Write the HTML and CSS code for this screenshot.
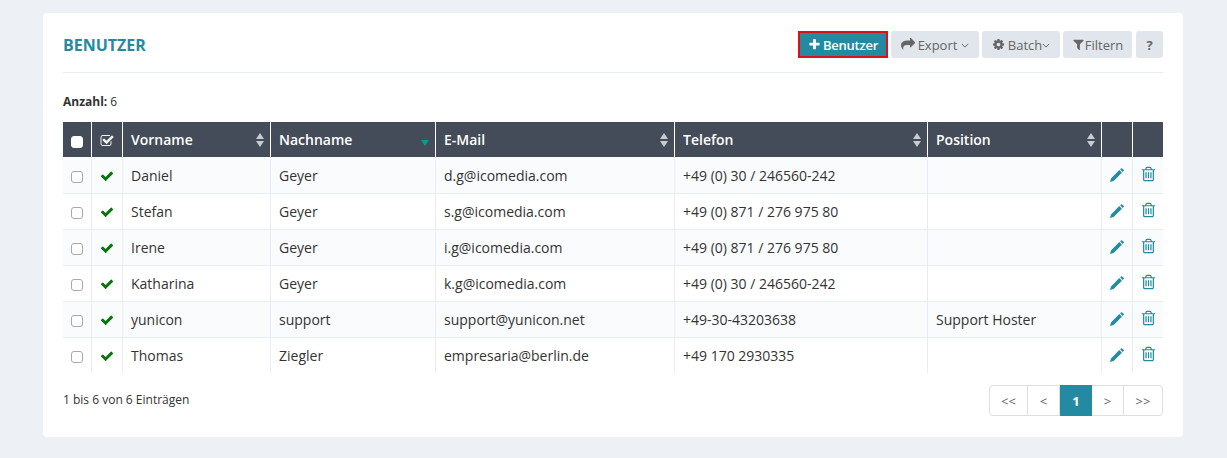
FILE: index.html
```html
<!DOCTYPE html>
<html lang="de">
<head>
<meta charset="utf-8">
<title>Benutzer</title>
<link rel="stylesheet" href="styles.css">
</head>
<body>
<svg class="sprite" xmlns="http://www.w3.org/2000/svg">
<symbol id="i-plus" viewBox="0 0 1792 1792"><path d="M1600 736v192q0 40-28 68t-68 28h-416v416q0 40-28 68t-68 28h-192q-40 0-68-28t-28-68v-416h-416q-40 0-68-28t-28-68v-192q0-40 28-68t68-28h416v-416q0-40 28-68t68-28h192q40 0 68 28t28 68v416h416q40 0 68 28t28 68z"/></symbol>
<symbol id="i-share" viewBox="0 0 1792 1792"><path d="M1792 640q0 26-19 45l-512 512q-19 19-45 19t-45-19-19-45v-256h-224c-400 0-640 70-640 420 0 60 6 110 14 160 4 24-24 36-38 16-60-90-264-300-264-560 0-480 420-616 928-616h224v-256q0-26 19-45t45-19 45 19l512 512q19 19 19 45z"/></symbol>
<symbol id="i-cog" viewBox="0 0 1792 1792"><path d="M1152 896q0-106-75-181t-181-75-181 75-75 181 75 181 181 75 181-75 75-181zm512-109v222q0 12-8 23t-20 13l-185 28q-19 54-39 91 35 50 107 138 10 12 10 25t-9 23q-27 37-99 108t-94 71q-12 0-26-9l-138-108q-44 23-91 38-16 136-29 186-7 28-36 28h-222q-14 0-24.500-8.500t-11.500-21.500l-28-184q-49-16-90-37l-141 107q-10 9-25 9-14 0-25-11-126-114-165-168-7-10-7-23 0-12 8-23 15-21 51-66.500t54-70.500q-27-50-41-99l-183-27q-13-2-21-12.500t-8-23.500v-222q0-12 8-23t19-13l186-28q14-46 39-92-40-57-107-138-10-12-10-24 0-10 9-23 26-36 98.500-107.500t94.500-71.500q13 0 26 10l138 107q44-23 91-38 16-136 29-186 7-28 36-28h222q14 0 24.500 8.500t11.500 21.500l28 184q49 16 90 37l142-107q9-9 24-9 13 0 25 10 129 119 165 170 7 8 7 22 0 12-8 23-15 21-51 66.500t-54 70.500q26 50 41 98l183 28q13 2 21 12.500t8 23.500z"/></symbol>
<symbol id="i-filter" viewBox="0 0 1792 1792"><path d="M1595 295q17 41-14 70l-493 493v742q0 42-39 59-13 5-25 5-27 0-45-19l-256-256q-19-19-19-45v-486l-493-493q-31-29-14-70 17-39 59-39h1280q42 0 59 39z"/></symbol>
<symbol id="i-check" viewBox="0 0 1792 1792"><path d="M1671 566q0 40-28 68l-724 724-136 136q-28 28-68 28t-68-28l-136-136-362-362q-28-28-28-68t28-68l136-136q28-28 68-28t68 28l294 295 656-657q28-28 68-28t68 28l136 136q28 28 28 68z"/></symbol>
<symbol id="i-checksq" viewBox="0 0 1792 1792"><path d="M1472 930v318q0 119-84.500 203.500t-203.500 84.500h-832q-119 0-203.500-84.500t-84.500-203.500v-832q0-119 84.500-203.500t203.500-84.500h832q63 0 117 25 15 7 18 23 3 17-9 29l-49 49q-10 10-23 10-3 0-9-2-23-6-45-6h-832q-66 0-113 47t-47 113v832q0 66 47 113t113 47h832q66 0 113-47t47-113v-254q0-13 9-22l64-64q10-10 23-10 6 0 12 3 20 8 20 29zm231-489l-814 814q-24 24-57 24t-57-24l-430-430q-24-24-24-57t24-57l110-110q24-24 57-24t57 24l263 263 647-647q24-24 57-24t57 24l110 110q24 24 24 57t-24 57z"/></symbol>
<symbol id="i-pencil" viewBox="0 0 14 14"><path d="M0 14l1-3.600L9.300 2.100l2.600 2.600L3.600 13zM10.100 1.300L11 .4q.6-.5 1.200 0l1.400 1.400q.5.6 0 1.200l-.9.9z"/></symbol>
<symbol id="i-trash" viewBox="0 0 1792 1792"><path d="M704 736v576q0 14-9 23t-23 9h-64q-14 0-23-9t-9-23v-576q0-14 9-23t23-9h64q14 0 23 9t9 23zm256 0v576q0 14-9 23t-23 9h-64q-14 0-23-9t-9-23v-576q0-14 9-23t23-9h64q14 0 23 9t9 23zm256 0v576q0 14-9 23t-23 9h-64q-14 0-23-9t-9-23v-576q0-14 9-23t23-9h64q14 0 23 9t9 23zm128 724v-948h-896v948q0 22 7 40.500t14.500 27 10.500 8.500h832q3 0 10.500-8.500t14.500-27 7-40.500zm-672-1076h448l-48-117q-7-9-17-11h-317q-10 2-17 11zm928 32v64q0 14-9 23t-23 9h-96v948q0 83-47 143.500t-113 60.500h-832q-66 0-113-58.500t-47-141.500v-952h-96q-14 0-23-9t-9-23v-64q0-14 9-23t23-9h309l70-167q15-37 54-63t79-26h320q40 0 79 26t54 63l70 167h309q14 0 23 9t9 23z"/></symbol>
<symbol id="i-chev" viewBox="0 0 10 6"><path d="M1 1l4 4 4-4" fill="none" stroke="currentColor" stroke-width="1.200"/></symbol>
</svg>

<main class="card">
  <header class="head">
    <h1 class="title">BENUTZER</h1>
    <div class="actions">
      <button class="btn btn-add"><svg class="ico ico-plus"><use href="#i-plus"/></svg>Benutzer</button>
      <button class="btn btn-export"><svg class="ico ico-share"><use href="#i-share"/></svg>Export<svg class="chev chev-gap"><use href="#i-chev"/></svg></button>
      <button class="btn btn-batch"><svg class="ico ico-cog"><use href="#i-cog"/></svg>Batch<svg class="chev"><use href="#i-chev"/></svg></button>
      <button class="btn btn-filter"><svg class="ico ico-filter"><use href="#i-filter"/></svg>Filtern</button>
      <button class="btn btn-help">?</button>
    </div>
  </header>

  <p class="count"><b>Anzahl:</b> 6</p>

  <table class="grid">
    <colgroup>
      <col class="c-sel"><col class="c-act"><col class="c-first"><col class="c-last"><col class="c-mail"><col class="c-tel"><col class="c-pos"><col class="c-edit"><col class="c-del">
    </colgroup>
    <thead>
      <tr>
        <th class="mid"><span class="box box-head"></span></th>
        <th class="mid"><svg class="th-ico"><use href="#i-checksq"/></svg></th>
        <th class="sort">Vorname<span class="arrows"></span></th>
        <th class="sort">Nachname<span class="arrow-active"></span></th>
        <th class="sort">E-Mail<span class="arrows"></span></th>
        <th class="sort">Telefon<span class="arrows"></span></th>
        <th class="sort">Position<span class="arrows"></span></th>
        <th></th>
        <th></th>
      </tr>
    </thead>
    <tbody>
      <tr><td class="mid"><span class="box"></span></td><td class="mid"><svg class="ok"><use href="#i-check"/></svg></td><td>Daniel</td><td>Geyer</td><td>d.g@icomedia.com</td><td>+49 (0) 30 / 246560-242</td><td></td><td class="mid"><svg class="edit"><use href="#i-pencil"/></svg></td><td class="mid"><svg class="del"><use href="#i-trash"/></svg></td></tr>
      <tr><td class="mid"><span class="box"></span></td><td class="mid"><svg class="ok"><use href="#i-check"/></svg></td><td>Stefan</td><td>Geyer</td><td>s.g@icomedia.com</td><td>+49 (0) 871 / 276 975 80</td><td></td><td class="mid"><svg class="edit"><use href="#i-pencil"/></svg></td><td class="mid"><svg class="del"><use href="#i-trash"/></svg></td></tr>
      <tr><td class="mid"><span class="box"></span></td><td class="mid"><svg class="ok"><use href="#i-check"/></svg></td><td>Irene</td><td>Geyer</td><td>i.g@icomedia.com</td><td>+49 (0) 871 / 276 975 80</td><td></td><td class="mid"><svg class="edit"><use href="#i-pencil"/></svg></td><td class="mid"><svg class="del"><use href="#i-trash"/></svg></td></tr>
      <tr><td class="mid"><span class="box"></span></td><td class="mid"><svg class="ok"><use href="#i-check"/></svg></td><td>Katharina</td><td>Geyer</td><td>k.g@icomedia.com</td><td>+49 (0) 30 / 246560-242</td><td></td><td class="mid"><svg class="edit"><use href="#i-pencil"/></svg></td><td class="mid"><svg class="del"><use href="#i-trash"/></svg></td></tr>
      <tr><td class="mid"><span class="box"></span></td><td class="mid"><svg class="ok"><use href="#i-check"/></svg></td><td>yunicon</td><td>support</td><td>support@yunicon.net</td><td>+49-30-43203638</td><td>Support Hoster</td><td class="mid"><svg class="edit"><use href="#i-pencil"/></svg></td><td class="mid"><svg class="del"><use href="#i-trash"/></svg></td></tr>
      <tr><td class="mid"><span class="box"></span></td><td class="mid"><svg class="ok"><use href="#i-check"/></svg></td><td>Thomas</td><td>Ziegler</td><td>empresaria@berlin.de</td><td>+49 170 2930335</td><td></td><td class="mid"><svg class="edit"><use href="#i-pencil"/></svg></td><td class="mid"><svg class="del"><use href="#i-trash"/></svg></td></tr>
    </tbody>
  </table>

  <footer class="foot">
    <span class="info">1 bis 6 von 6 Einträgen</span>
    <nav class="pager">
      <a class="pg pg-end">&lt;&lt;</a><a class="pg pg-step">&lt;</a><a class="pg pg-cur">1</a><a class="pg pg-step">&gt;</a><a class="pg pg-end pg-last">&gt;&gt;</a>
    </nav>
  </footer>
</main>
</body>
</html>
```

FILE: styles.css
```css
* { box-sizing: border-box; }
html, body { height: 100%; }
body {
  margin: 0;
  padding: 13px 44px 0 43px;
  background: #edf1f6;
  font-family: "Open Sans", sans-serif;
  font-size: 14px;
  color: #333;
  overflow: hidden;
}
.sprite { display: none; }

.card {
  height: 424px;
  padding: 18px 20px 0;
  background: #fff;
  border-radius: 4px;
}

.head {
  display: flex;
  justify-content: space-between;
  align-items: flex-start;
  height: 42px;
  border-bottom: 1px solid #e9ecf0;
}
.title {
  margin: 0;
  padding-top: 5px;
  font-size: 16px;
  line-height: 18px;
  font-weight: 700;
  color: #238aa1;
}
.actions { display: flex; gap: 3px; }
.btn {
  display: flex;
  align-items: center;
  justify-content: center;
  height: 27px;
  margin: 0;
  padding: 0;
  border: 0;
  border-radius: 3px;
  background: #e1e5ec;
  color: #666;
  font: 13px "Open Sans", sans-serif;
}
.ico { fill: currentColor; flex: none; }
.btn-add {
  width: 90px;
  background: #238aa1;
  color: #fff;
  font-weight: 600;
  letter-spacing: -0.25px;
  border-radius: 0;
  outline: 2px solid #e0101a;
  outline-offset: -2px;
}
.btn-export { width: 88px; }
.btn-batch { width: 78px; }
.btn-filter { width: 69px; }
.btn-help { width: 27px; margin-left: 1px; font-weight: 700; }
.ico-plus { width: 13px; height: 13px; margin-right: 2px; }
.ico-share { width: 14px; height: 14px; margin-right: 3px; }
.ico-cog { width: 13px; height: 13px; margin-right: 3px; }
.ico-filter { width: 13px; height: 13px; }
.chev { width: 8px; height: 5px; color: #666; margin-top: 1px; }
.chev-gap { margin-left: 4px; }

.count {
  margin: 0;
  padding-top: 22px;
  height: 49px;
  font-size: 12px;
  line-height: 14px;
}
.count b { font-weight: 700; }

.grid {
  width: 1100px;
  table-layout: fixed;
  border-collapse: separate;
  border-spacing: 0;
}
.c-sel { width: 29px; }
.c-act { width: 31px; }
.c-first { width: 148px; }
.c-last { width: 165px; }
.c-mail { width: 239px; }
.c-tel { width: 253px; }
.c-pos { width: 174px; }
.c-edit { width: 31px; }
.c-del { width: 30px; }

.grid th {
  position: relative;
  height: 35px;
  padding: 0 8px;
  background: #434c58;
  color: #fff;
  font-size: 14px;
  font-weight: 600;
  text-align: left;
  border-right: 1px solid #fff;
}
.grid th:last-child, .grid td:last-child { border-right: 0; }
.grid td {
  height: 36px;
  padding: 0 8px;
  font-size: 14px;
  border-right: 1px solid #e9ecf2;
  border-top: 1px solid #e9ecf2;
}
.grid tbody tr:first-child td { border-top-color: #fafbfd; }
.grid tbody tr:nth-child(odd) td { background: #fafbfd; }
.grid .mid { padding: 0; text-align: center; }

.box {
  display: inline-block;
  width: 12px;
  height: 12px;
  margin-bottom: 1px;
  background: #fff;
  border: 1px solid #a9a9a9;
  border-radius: 3px;
  vertical-align: middle;
}
.box-head { margin: 2px 0 0; border-color: #fff; }
.th-ico { width: 14px; height: 14px; margin-right: 1px; fill: #f2f2f2; vertical-align: middle; }
.ok { width: 14px; height: 14px; margin-bottom: 2px; fill: #0a730f; vertical-align: middle; }
.edit { width: 14px; height: 14px; margin-bottom: 3px; fill: #238aa1; vertical-align: middle; }
.del { width: 17px; height: 18px; margin-bottom: 3px; fill: #238aa1; vertical-align: middle; }

.arrows::before, .arrows::after, .arrow-active::after {
  content: "";
  position: absolute;
  right: 6px;
  border-left: 4.5px solid transparent;
  border-right: 4.5px solid transparent;
}
.arrows::before { top: 11px; border-bottom: 6px solid #c9ccd1; }
.arrows::after { top: 19px; border-top: 6px solid #c9ccd1; }
.arrow-active::after { top: 18px; border-top: 6px solid #0b9a8d; }

.foot {
  display: flex;
  justify-content: space-between;
  align-items: flex-start;
  padding-top: 12px;
}
.info { font-size: 12px; line-height: 30px; }
.pager {
  display: flex;
  height: 31px;
  border: 1px solid #dedede;
  border-radius: 4px;
}
.pg {
  display: flex;
  align-items: center;
  justify-content: center;
  font-size: 13px;
  color: #666;
  border-right: 1px solid #dedede;
}
.pg-last { border-right: 0; }
.pg-end { width: 38px; }
.pg-step { width: 32px; }
.pg-cur {
  width: 32px;
  margin: -1px 0;
  background: #238aa1;
  color: #fff;
  font-weight: 700;
  border-right: 0;
}
```
